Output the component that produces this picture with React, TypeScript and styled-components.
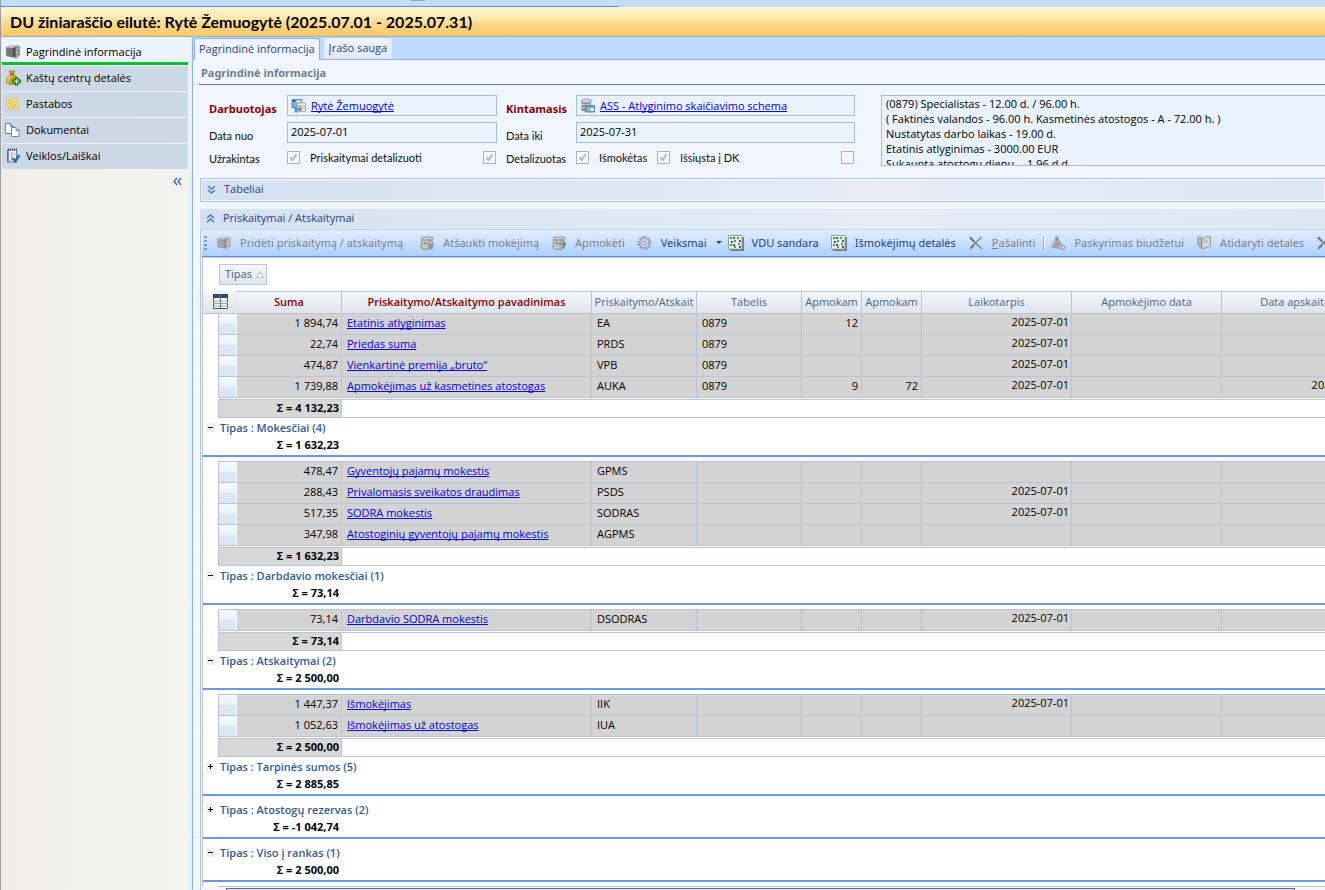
import React from 'react';
import styled, { createGlobalStyle } from 'styled-components';

const FONT = '"Open Sans", "Noto Sans", sans-serif';

const GlobalStyle = createGlobalStyle`
  * { box-sizing: border-box; }
  body { margin: 0; font-family: ${FONT}; font-size: 11px; line-height: 14px; color: #000; background: #eff6ff; }
  button, input, textarea { font: inherit; color: inherit; margin: 0; }
`;

/* ---------- page frame ---------- */

const Window = styled.div`
  height: 100vh;
  display: flex;
  flex-direction: column;
  overflow: hidden;
  border-left: 1px solid #9b9b9b;
`;

const TopStrip = styled.div`
  flex: none;
  height: 7px;
  background: #c3dcff;
  display: flex;
`;

const TopRibbon = styled.div`
  width: 47%;
  max-width: 618px;
  border-bottom: 1px solid #6593cf;
  background: #c3dcff;
  position: relative;
  &::after {
    content: '';
    position: absolute;
    left: 410px;
    top: 0;
    width: 14px;
    height: 1px;
    background: #9aa3b4;
  }
`;

const TitleBar = styled.header`
  flex: none;
  height: 30px;
  padding: 0 9px;
  display: flex;
  align-items: center;
  background: linear-gradient(#fff8d6 0%, #ffe6a8 40%, #fdd78a 60%, #fbc765 100%);
  border-bottom: 1px solid #8db2e3;
`;

const Title = styled.h1`
  margin: 0;
  font: 700 16px/20px Lato, "Noto Sans", sans-serif;
  white-space: nowrap;
`;

const Body = styled.div`
  flex: 1;
  min-height: 0;
  display: flex;
`;

/* ---------- sidebar ---------- */

const Sidebar = styled.nav`
  flex: none;
  width: 188px;
  padding: 3px 1px 0;
  background: linear-gradient(90deg, #eeedea, #f3f4f1);
  display: flex;
  flex-direction: column;
`;

const SideLink = styled.a<{ $active?: boolean }>`
  height: 25px;
  margin-bottom: 1px;
  padding: ${p => (p.$active ? '2px 3px 0' : '0 3px 2px')};
  display: flex;
  align-items: center;
  gap: 5px;
  color: #000;
  text-decoration: none;
  font-size: 11px;
  background: ${p => (p.$active ? '#ebf3fd' : '#cdd8e6')};
  border-bottom: ${p => (p.$active ? '3px solid #00c136' : '0')};
`;

const CollapseButton = styled.button`
  align-self: flex-end;
  margin: 5px 4px 0 0;
  padding: 2px;
  border: 0;
  background: none;
  line-height: 0;
`;

const Splitter = styled.div`
  flex: none;
  width: 4px;
  background: #e7f0fc;
  border-right: 1px solid #8db2e3;
`;

const Main = styled.main`
  flex: 1;
  min-width: 0;
  display: flex;
  flex-direction: column;
  background: #eff6ff;
`;

const Tabs = styled.div`
  flex: none;
  height: 23px;
  padding: 1px 1px 0;
  display: flex;
  gap: 4px;
  background: #bfdaff;
  border-bottom: 1px solid #8db2e3;
`;

const Tab = styled.button<{ $active?: boolean }>`
  height: ${p => (p.$active ? 22 : 21)}px;
  padding: 0 4px 2px;
  border: 1px solid ${p => (p.$active ? '#8db2e3' : '#d9e8fb')};
  border-bottom: 0;
  border-radius: 3px 3px 0 0;
  background: ${p => (p.$active ? '#eff6ff' : 'linear-gradient(#f1f4fa, #dfe9f8)')};
  color: #1f3f87;
  white-space: nowrap;
`;

const Content = styled.div`
  flex: 1;
  min-height: 0;
  padding-left: 6px;
  display: flex;
  flex-direction: column;
`;

const SectionTitle = styled.h2`
  flex: none;
  margin: 0 0 10px;
  height: 25px;
  padding: 6px 2px 0;
  font-size: 11px;
  line-height: 14px;
  font-family: "Noto Sans", sans-serif;
  color: #6f7f90;
  border-bottom: 1px solid #707c98;
`;

/* ---------- form ---------- */

const Form = styled.form`
  flex: none;
  display: grid;
  grid-template-columns: 78px 210px 9px 70px 279px 26px minmax(100px, 1fr);
  grid-template-rows: 21px 21px 17px;
  row-gap: 6px;
  padding-left: 10px;
  margin-bottom: 12px;
  overflow: hidden;
`;

const Label = styled.label<{ $required?: boolean; $col?: number }>`
  ${p => (p.$col ? `grid-column: ${p.$col};` : '')}
  align-self: end;
  white-space: nowrap;
  font-family: ${p => (p.$required ? '"Open Sans"' : 'Lato')}, "Noto Sans", sans-serif;
  font-size: 11px;
  line-height: 14px;
  font-weight: ${p => (p.$required ? 700 : 400)};
  color: ${p => (p.$required ? '#8b0000' : '#111')};
`;

const LinkField = styled.div<{ $col: number }>`
  grid-column: ${p => p.$col};
  display: flex;
  align-items: center;
  gap: 4px;
  padding: 0 3px;
  background: #eaf2fd;
  border: 1px solid #a3bde0;
`;

const Link = styled.a`
  color: #0000ee;
  text-decoration: underline;
  text-decoration-skip-ink: none;
  white-space: nowrap;
`;

const TextField = styled.input<{ $col: number }>`
  grid-column: ${p => p.$col};
  min-width: 0;
  padding: 0 3px 2px;
  background: #eaf2fd;
  border: 1px solid #a3bde0;
  border-radius: 0;
  outline: 0;
`;

const Memo = styled.textarea`
  grid-column: 7;
  grid-row: 1 / span 3;
  height: 71px;
  padding: 0 4px;
  line-height: 15px;
  background: #eaf2fd;
  border: 1px solid #a3bde0;
  border-right: 0;
  resize: none;
  overflow: hidden;
  outline: 0;
  white-space: pre;
`;

const CheckRow = styled.div<{ $col: number }>`
  grid-column: ${p => p.$col};
  display: flex;
  align-items: center;
  padding-right: 1px;
`;

const Push = styled.span`
  flex: 1;
`;

const CheckLabel = styled(Label)<{ $w?: number }>`
  align-self: center;
  margin-left: 10px;
  width: ${p => (p.$w ? p.$w + 'px' : 'auto')};
`;

const Check = styled.input`
  appearance: none;
  flex: none;
  width: 13px;
  height: 13px;
  border: 1px solid #b1b1b4;
  background: #f3f6fa;
  box-shadow: inset 0 0 0 1px #fff;
  &:checked {
    background: #f3f6fa
      url("data:image/svg+xml,%3Csvg xmlns='http://www.w3.org/2000/svg' width='11' height='11'%3E%3Cpath d='M2.5 5.5 4.7 8 8.5 2.2' fill='none' stroke='%23abbdd6' stroke-width='2'/%3E%3C/svg%3E")
      center no-repeat;
  }
`;

/* ---------- collapsible groups ---------- */

const Collapsed = styled.section`
  flex: none;
  height: 24px;
  margin: 0 0 7px 1px;
  border: 1px solid #b3c5da;
  border-right: 0;
  box-shadow: inset 0 0 0 1px #f5f9ff;
  background: linear-gradient(90deg, #d5e1f1, #e5ecf6 60%, #dde7f4);
`;

const GroupToggle = styled.button`
  display: flex;
  align-items: center;
  gap: 8px;
  width: 100%;
  height: 100%;
  padding: 0 0 2px 6px;
  border: 0;
  background: none;
  color: #1f3f87;
  text-align: left;
`;

const Expanded = styled.section`
  flex: 1;
  min-height: 0;
  margin-left: 1px;
  display: flex;
  flex-direction: column;
  border-left: 1px solid #b3c5da;
  border-top-left-radius: 3px;
`;

const ExpandedHead = styled.div`
  flex: none;
  height: 20px;
  margin-left: -1px;
  border-top-left-radius: 3px;
  background: linear-gradient(90deg, #d5e1f1, #e5ecf6 60%, #dde7f4);
`;

const Toolbar = styled.div`
  flex: none;
  height: 28px;
  margin-left: 1px;
  padding-left: 2px;
  display: flex;
  align-items: center;
  overflow: hidden;
  background: linear-gradient(#e0edff, #cbe1ff 45%, #abcfff);
  border-top: 1px solid #bcd9ff;
  border-bottom: 1px solid #6593cf;
`;

const Grip = styled.span`
  flex: none;
  width: 3px;
  height: 15px;
  margin-right: 9px;
  background: repeating-linear-gradient(#6f9ad6 0 2px, transparent 2px 4px);
`;

const Tool = styled.button<{ $off?: boolean; $tail?: number }>`
  flex: none;
  display: flex;
  align-items: center;
  gap: 8px;
  height: 22px;
  padding: 0 ${p => p.$tail ?? 12}px 0 0;
  border: 0;
  background: none;
  font-family: "Noto Sans", sans-serif;
  font-size: 11px;
  white-space: nowrap;
  color: ${p => (p.$off ? '#7b8088' : '#1f3f87')};
`;

const Separator = styled.span`
  flex: none;
  width: 2px;
  height: 15px;
  margin-right: 5px;
  border-left: 1px solid #8db2e3;
  border-right: 1px solid #fff;
`;

/* ---------- grid ---------- */

const GridBox = styled.div`
  flex: 1;
  min-height: 0;
  margin-left: 1px;
  overflow: hidden;
  background: #fff;
  border-top: 1px solid #c3c8d8;
  border-left: 1px solid #bcc3d6;
`;

const GroupPanel = styled.div`
  height: 33px;
  padding: 6px 16px;
`;

const GroupBy = styled.button`
  height: 21px;
  width: 48px;
  padding: 0 5px 1px;
  display: flex;
  align-items: center;
  gap: 4px;
  border: 1px solid #bcc3d6;
  background: linear-gradient(#f5f8fb, #dfe5ee);
  color: #3f5f8a;
`;

const Table = styled.table`
  table-layout: fixed;
  width: 1169px;
  border-collapse: separate;
  border-spacing: 0;
`;

const Head = styled.th<{ $required?: boolean; $corner?: boolean }>`
  height: 23px;
  padding: 0 2px 2px;
  overflow: hidden;
  white-space: nowrap;
  text-align: center;
  font-weight: ${p => (p.$required ? 600 : 400)};
  color: ${p => (p.$required ? '#8b0000' : '#4a6690')};
  background: linear-gradient(#f3f6f9, #dfe4ed);
  border-top: 1px solid ${p => (p.$corner ? '#f3f6f9' : '#bcc3d6')};
  border-right: 1px solid ${p => (p.$corner ? '#dfe4ed' : '#bcc3d6')};
  border-bottom: 1px solid #bcc3d6;
  svg { display: block; margin: 0 0 0 8px; }
`;

const Margin = styled.td`
  padding: 0;
`;

const Selector = styled.td`
  padding: 0;
  background: linear-gradient(#f6fafd 0, #e9f1f8 48%, #dce8f3 52%, #d9e7f3);
  border-left: 1px solid #bcc3d6;
  border-bottom: 1px solid #bcc3d6;
  border-right: 1px solid #f6fafd;
`;

const Cell = styled.td<{ $right?: boolean; $flush?: boolean; $raised?: boolean }>`
  height: 21px;
  padding: 0 ${p => (p.$flush ? 2 : 3)}px ${p => (p.$raised ? 4 : 2)}px 5px;
  overflow: hidden;
  white-space: nowrap;
  text-align: ${p => (p.$right ? 'right' : 'left')};
  background: #d3d3d3;
  border-right: 1px solid #bcc3d6;
  border-bottom: 1px solid #bcc3d6;
`;

const TopRule = styled.td`
  height: 5px;
  padding: 0;
  border-bottom: 1px solid #bcc3d6;
`;

const FooterCell = styled.td`
  height: 20px;
  padding: 1px 0 0;
`;

const FooterBox = styled.div<{ $sum?: boolean }>`
  height: 19px;
  padding-right: 2px;
  line-height: 16px;
  font-weight: 700;
  text-align: right;
  background: ${p => (p.$sum ? '#d8d8d8' : '#fff')};
  border: 1px solid #bcc3d6;
  border-left-width: ${p => (p.$sum ? 1 : 0)}px;
`;

const GroupCell = styled.td<{ $gap?: boolean }>`
  padding: ${p => (p.$gap ? 5 : 1)}px 0 0 3px;
  height: ${p => (p.$gap ? 43 : 39)}px;
  vertical-align: top;
  font-weight: 700;
  border-bottom: 2px solid #6c9ad9;
`;

const GroupName = styled.div`
  display: flex;
  align-items: center;
  gap: 5px;
  height: 17px;
  font-weight: 600;
  color: #2f5b9c;
`;

const ExpandButton = styled.button`
  width: 9px;
  height: 9px;
  padding: 0;
  border: 0;
  background: #efefef;
  line-height: 0;
`;

const GroupSum = styled.div`
  width: 133px;
  text-align: right;
  line-height: 17px;
`;

const ScrollStub = styled.div`
  flex: none;
  height: 3px;
  margin-left: 1px;
  padding: 1px 30px 0 24px;
  background: #f3f5f8;
  &::before {
    content: '';
    display: block;
    height: 2px;
    border: 1px solid #5a6a90;
    border-bottom: 0;
    background: #dfe6f2;
  }
`;

/* ---------- icons ---------- */

const IconSvg = styled.svg`
  flex: none;
`;

const Icon: React.FC<{ children: React.ReactNode; w?: number; h?: number }> = ({ children, w = 16, h = 16 }) => (
  <IconSvg width={w} height={h} viewBox={`0 0 ${w} ${h}`} aria-hidden="true">{children}</IconSvg>
);

const SafeIcon = ({ light }: { light?: boolean }) => (
  <Icon>
    <path d="M1 3.500 5 1.500h8l2 1v9l-2.500 1.500-1.500 2L8 13 1.500 12z" fill={light ? '#b5b5b5' : '#8c8c8c'} />
    <path d="m1 3.500 6.500 1v9L1.500 12z" fill={light ? '#a4a4a4' : '#767676'} />
    <path d="M1.500 3.300 5.500 1.500H13L8 4.200z" fill={light ? '#d0d0d0' : '#c4c4c4'} />
    <path d="m7.500 4.500 3.500-1.500v9l-3.500 1.500z" fill={light ? '#8f8f8f' : '#505050'} />
    <path d="m10.500 4.500 4-2v9l-3.500 3.500z" fill={light ? '#bdbdbd' : '#a6a6a6'} />
    <circle cx="12" cy="8.500" r="1.700" fill={light ? '#e6e6e6' : '#d8d8d8'} stroke={light ? '#8a8a8a' : '#555'} strokeWidth=".8" />
  </Icon>
);

const MoneyBagIcon = () => (
  <Icon>
    <path d="M4.500 1h5L8.500 3.500h-3z" fill="#d8a63a" stroke="#8d6a24" strokeWidth=".7" />
    <path d="M5.500 4h3c3 2 4 4.500 3.500 7.500-.3 2-2 3-5 3s-5-.5-5.500-2.500C1 9 2.500 6 5.500 4z" fill="#d9a028" stroke="#a5771c" strokeWidth=".6" />
    <path d="M5 6C3.500 7.500 2.800 9 3 11" stroke="#f8df92" strokeWidth="1.500" fill="none" />
    <path d="M5 4h4" stroke="#7d5b1b" />
    <path d="M10 7.500h3v2.300h2.500v3H13V15h-3v-2.200H7.500v-3H10z" fill="#2aa22a" stroke="#0d6c14" strokeWidth=".8" />
    <path d="M11.500 9v5M9 11.300h5" stroke="#c9f9bb" />
  </Icon>
);

const NotesIcon = () => (
  <Icon>
    <path d="M.5 5 11 1.500l3.500 10L4.500 15z" fill="#e9c858" />
    <path d="m1 4 10-2.500L14 12 4.500 14.500z" fill="#fbe992" stroke="#dcbc52" strokeWidth=".7" />
    <path d="m3 5.700 7.500-2M3.500 7.900l7.500-2M4.200 10.100l7.500-2M4.800 12.200l7.500-2" stroke="#c9a844" strokeWidth=".9" />
  </Icon>
);

const DocsIcon = () => (
  <Icon>
    <path d="M.5 1.500h5L8.500 4.500v7h-8z" fill="#fff" stroke="#6f86ac" />
    <path d="M5.500 1.500v3h3" fill="none" stroke="#6f86ac" />
    <path d="M6.500 5.500h4.500l3 3v6H6.500z" fill="#fff" stroke="#6f86ac" />
    <path d="M11 5.500v3h3" fill="none" stroke="#6f86ac" />
  </Icon>
);

const TasksIcon = () => (
  <Icon>
    <path d="M2.500 2h9v12h-9z" fill="#eef2f8" stroke="#6b7d9d" />
    <path d="M3 2v12" stroke="#54709e" strokeWidth="1.500" />
    <path d="M3 1.500h9" stroke="#44464d" strokeWidth="2" strokeDasharray="1 1" />
    <path d="M6.500 4v9" stroke="#d99898" />
    <path d="M7.500 5.500h3M7.500 7.500h3" stroke="#b9c6dc" />
    <path d="m7.500 10 2.700 3.200L14.500 7" stroke="#2868b8" strokeWidth="2.400" fill="none" />
  </Icon>
);

const PersonCardIcon = () => (
  <Icon>
    <path d="M1 1.500h10v8H1z" fill="#7fb4e2" stroke="#4f7fb0" strokeWidth=".8" />
    <path d="M1.500 2h3v2h-3z" fill="#2c5c94" />
    <path d="M5.500 2.500h5v2h-5z" fill="#ddeefc" />
    <path d="M3 9h4v5.500H4z" fill="#4a93cf" />
    <path d="M6.500 5h8v8.500h-8z" fill="#f4f1e8" stroke="#9aa0a8" strokeWidth=".8" />
    <path d="M7.500 7h3v3.500h-3z" fill="#dca14e" />
    <path d="M7.300 10.500h3.500v2H7.300z" fill="#3b6cab" />
    <path d="M11.500 8h2.300M11.500 10h2.300" stroke="#9da5b2" />
  </Icon>
);

const SchemaIcon = () => (
  <Icon>
    <path d="M1.500 3v9c0 1.500 8 2 9.500 0V3z" fill="#87909f" />
    <ellipse cx="6.500" cy="3" rx="5.500" ry="2" fill="#d3cede" stroke="#88849a" strokeWidth=".7" />
    <path d="M2 6c2 1.200 6 1.200 8.500 0M2 9c1.500 1 3 1 4 1" stroke="#d6dde8" fill="none" />
    <path d="M5.500 7.500h9v6.500h-9z" fill="#6ca9dc" stroke="#47749f" strokeWidth=".8" />
    <path d="M7 10h3v3H7z" fill="#e8a94c" />
    <path d="M10.500 10h3.500v3h-3.500z" fill="#e5eef8" />
  </Icon>
);

const PaymentIcon = ({ cancel }: { cancel?: boolean }) => (
  <Icon>
    <path d="M3 2h10.500l1 1.500-1.500 2L14 8v4l-2.500 2.500H3L1.500 12l.8-3L2 5.500z" fill="#b4b6b8" stroke="#97999b" strokeWidth=".8" />
    <path d="M4 3.500h8M3.500 6.500h5M3.500 9.500h4M3.500 12h5" stroke="#e2e3e3" strokeWidth="1.200" />
    <path d="M3 5h9.500M9.500 3.500v3" stroke="#8b8d90" strokeWidth=".9" />
    <circle cx="6" cy="8" r="1.500" fill="#8f9193" />
    {cancel ? (
      <path d="m9 8.500 5 5m0-5-5 5" stroke="#87898c" strokeWidth="1.600" />
    ) : (
      <path d="M8 9h6l-2-2.500m2 2.500-3 4.500" stroke="#808285" strokeWidth="1.600" fill="none" />
    )}
  </Icon>
);

const GearIcon = () => (
  <Icon>
    <circle cx="7.500" cy="8" r="6" fill="none" stroke="#8d8fb2" strokeWidth="2" strokeDasharray="1.600 1.542" />
    <circle cx="7.500" cy="8" r="4.800" fill="#cdcee8" stroke="#9495b8" />
    <circle cx="7.500" cy="8" r="3" fill="#dedff0" />
    <circle cx="7.500" cy="8" r="1.800" fill="#dcebff" stroke="#8486a6" />
  </Icon>
);

const MatrixIcon = () => (
  <Icon>
    <path d="M2 2h14v14H2z" fill="#777b80" />
    <path d="M.5.500h13.500v13.500H.5z" fill="#fbfcfd" stroke="#9a9ea2" />
    <path d="M4 1v12.500M7.300 1v12.500M10.600 1v12.500M1 4h12.500M1 7.300h12.500M1 10.600h12.500" stroke="#d4d8dc" strokeWidth=".8" />
    <path d="M2 2h2v2H2zM9 2h2v2H9zM6 5h2v2H6zM10 8h2v2h-2zM2 9h2v2H2zM6 11h2v2H6z" fill="#38b41c" />
    <path d="M5 2h2v2H5zM3 6h2v2H3zM11 5h2v2h-2zM5 9h2v2H5zM11 11h2v2h-2z" fill="#315fb8" />
  </Icon>
);

const CrossIcon = () => (
  <Icon>
    <path d="M2 2c3 3 7 8 12 12M14 2C9 6 5 10 2 14" stroke="#858585" strokeWidth="1.500" fill="none" />
    <path d="m2 2.500 4 4M3 13l3-3" stroke="#777" strokeWidth="2" />
  </Icon>
);

const BudgetIcon = () => (
  <Icon>
    <path d="M5 1h4L8 4H6z" fill="#a5a7a9" />
    <path d="M6 4h2c3 2 4 5 3.500 7.500C11 14 2 14 1.500 11.500 1.300 9 3 6 6 4z" fill="#a2a4a7" />
    <path d="M5.200 6C4 7.500 3.300 9 3.500 10" stroke="#dcddde" fill="none" />
    <path d="M5 4.200h4" stroke="#777" />
    <circle cx="10" cy="11.500" r="2" fill="#cfd1d3" stroke="#8d8f92" />
    <circle cx="13" cy="12.500" r="2" fill="#d6d8da" stroke="#8d8f92" />
  </Icon>
);

const OpenIcon = () => (
  <Icon>
    <path d="M1 2.500 4 1l3 2v7l-2 4-4-5z" fill="#9fa1a3" />
    <path d="m2.500 3 2 1M2 6h3M2.500 9h3" stroke="#e2e3e4" />
    <path d="m6 4 3-1 1-1.500h4.500V11L6 14z" fill="#d6d8da" stroke="#8e9092" strokeWidth=".9" />
    <path d="m8 6 4-1M8 8l4-1" stroke="#b3b5b7" />
  </Icon>
);

const ChevronsIcon = ({ up }: { up?: boolean }) => (
  <Icon w={9} h={9}>
    <path d={up ? 'm1 4 3.500-3L8 4M1 8l3.500-3L8 8' : 'm1 1 3.500 3L8 1M1 5l3.500 3L8 5'} stroke="#4278b5" strokeWidth="1.400" fill="none" />
  </Icon>
);

const CollapseIcon = () => (
  <Icon w={9} h={9}>
    <path d="M4 1 1 4.500 4 8M8 1 5 4.500 8 8" stroke="#2f63a8" strokeWidth="1.200" fill="none" />
  </Icon>
);

const ColumnsIcon = () => (
  <Icon>
    <path d="M.5.500h14v14H.5z" fill="#fff" stroke="#40566b" />
    <path d="M0 0h15v4H0z" fill="#33495f" />
    <path d="M0 7h15M0 9.500h15M0 12h15" stroke="#8ba3bb" />
    <path d="M7.500 0v15" stroke="#5d7890" />
  </Icon>
);

const SignIcon = ({ plus }: { plus?: boolean }) => (
  <Icon w={9} h={9}>
    <path d={plus ? 'M2 4.500h5M4.500 2v5' : 'M2 4.500h5'} stroke="#000" />
  </Icon>
);

/* ---------- data ---------- */

type Row = [sum: string, name: string, code: string, sheet: string, days: string, hours: string, period: string, posted: string];

interface Group {
  name?: string;
  sum: string;
  open?: boolean;
  gap?: boolean;
  rows: Row[];
}

const groups: Group[] = [
  {
    sum: '4 132,23',
    rows: [
      ['1 894,74', 'Etatinis atlyginimas', 'EA', '0879', '12', '', '2025-07-01', ''],
      ['22,74', 'Priedas suma', 'PRDS', '0879', '', '', '2025-07-01', ''],
      ['474,87', 'Vienkartinė premija „bruto“', 'VPB', '0879', '', '', '2025-07-01', ''],
      ['1 739,88', 'Apmokėjimas už kasmetines atostogas', 'AUKA', '0879', '9', '72', '2025-07-01', '2025-07-01'],
    ],
  },
  {
    name: 'Mokesčiai (4)',
    sum: '1 632,23',
    open: true,
    rows: [
      ['478,47', 'Gyventojų pajamų mokestis', 'GPMS', '', '', '', '', ''],
      ['288,43', 'Privalomasis sveikatos draudimas', 'PSDS', '', '', '', '2025-07-01', ''],
      ['517,35', 'SODRA mokestis', 'SODRAS', '', '', '', '2025-07-01', ''],
      ['347,98', 'Atostoginių gyventojų pajamų mokestis', 'AGPMS', '', '', '', '', ''],
    ],
  },
  {
    name: 'Darbdavio mokesčiai (1)',
    sum: '73,14',
    open: true,
    rows: [['73,14', 'Darbdavio SODRA mokestis', 'DSODRAS', '', '', '', '2025-07-01', '']],
  },
  {
    name: 'Atskaitymai (2)',
    sum: '2 500,00',
    open: true,
    rows: [
      ['1 447,37', 'Išmokėjimas', 'IIK', '', '', '', '2025-07-01', ''],
      ['1 052,63', 'Išmokėjimas už atostogas', 'IUA', '', '', '', '', ''],
    ],
  },
  { name: 'Tarpinės sumos (5)', sum: '2 885,85', rows: [] },
  { name: 'Atostogų rezervas (2)', sum: '-1 042,74', gap: true, rows: [] },
  { name: 'Viso į rankas (1)', sum: '2 500,00', gap: true, open: true, rows: [] },
];

const columnWidths = [15, 19, 105, 250, 105, 105, 60, 60, 150, 150, 150];

const memo = `(0879) Specialistas - 12.00 d. / 96.00 h.
( Faktinės valandos - 96.00 h. Kasmetinės atostogos - A - 72.00 h. )
Nustatytas darbo laikas - 19.00 d.
Etatinis atlyginimas - 3000.00 EUR
Sukaupta atostogų dienų - -1.96 d.d`;

const GroupBody = ({ group }: { group: Group }) => (
  <tbody>
    {group.name && (
      <tr>
        <GroupCell colSpan={11} $gap={group.gap}>
          <GroupName>
            <ExpandButton type="button" aria-label={group.open ? 'Suskleisti' : 'Išskleisti'}>
              <SignIcon plus={!group.open} />
            </ExpandButton>
            Tipas : {group.name}
          </GroupName>
          <GroupSum>Σ = {group.sum}</GroupSum>
        </GroupCell>
      </tr>
    )}
    {group.open && (
      <tr>
        <Margin />
        <TopRule colSpan={10} />
      </tr>
    )}
    {group.rows.map(([sum, name, code, sheet, days, hours, period, posted]) => (
      <tr key={name}>
        <Margin />
        <Selector />
        <Cell $right>{sum}</Cell>
        <Cell><Link href="#">{name}</Link></Cell>
        <Cell>{code}</Cell>
        <Cell>{sheet}</Cell>
        <Cell $right>{days}</Cell>
        <Cell $right>{hours}</Cell>
        <Cell $right $flush $raised>{period}</Cell>
        <Cell />
        <Cell $right $flush $raised>{posted}</Cell>
      </tr>
    ))}
    {group.rows.length > 0 && (
      <tr>
        <Margin />
        <FooterCell colSpan={2}><FooterBox $sum>Σ = {group.sum}</FooterBox></FooterCell>
        <FooterCell colSpan={8}><FooterBox /></FooterCell>
      </tr>
    )}
  </tbody>
);

export default function App() {
  return (
    <>
      <GlobalStyle />
      <Window>
        <TopStrip><TopRibbon /></TopStrip>
        <TitleBar>
          <Title>DU žiniaraščio eilutė: Rytė Žemuogytė (2025.07.01 - 2025.07.31)</Title>
        </TitleBar>
        <Body>
          <Sidebar>
            <SideLink href="#" $active><SafeIcon />Pagrindinė informacija</SideLink>
            <SideLink href="#"><MoneyBagIcon />Kaštų centrų detalės</SideLink>
            <SideLink href="#"><NotesIcon />Pastabos</SideLink>
            <SideLink href="#"><DocsIcon />Dokumentai</SideLink>
            <SideLink href="#"><TasksIcon />Veiklos/Laiškai</SideLink>
            <CollapseButton type="button" aria-label="Suskleisti meniu"><CollapseIcon /></CollapseButton>
          </Sidebar>
          <Splitter />
          <Main>
            <Tabs>
              <Tab type="button" $active>Pagrindinė informacija</Tab>
              <Tab type="button">Įrašo sauga</Tab>
            </Tabs>
            <Content>
              <SectionTitle>Pagrindinė informacija</SectionTitle>
              <Form>
                <Label as="span" $required $col={1}>Darbuotojas</Label>
                <LinkField $col={2}><PersonCardIcon /><Link href="#">Rytė Žemuogytė</Link></LinkField>
                <Label as="span" $required $col={4}>Kintamasis</Label>
                <LinkField $col={5}><SchemaIcon /><Link href="#">ASS - Atlyginimo skaičiavimo schema</Link></LinkField>
                <Memo readOnly aria-label="Aprašymas" value={memo} />
                <Label htmlFor="from" $col={1}>Data nuo</Label>
                <TextField id="from" $col={2} defaultValue="2025-07-01" />
                <Label htmlFor="to" $col={4}>Data iki</Label>
                <TextField id="to" $col={5} defaultValue="2025-07-31" />
                <Label htmlFor="locked" $col={1}>Užrakintas</Label>
                <CheckRow $col={2}>
                  <Check type="checkbox" id="locked" defaultChecked />
                  <CheckLabel htmlFor="accruals">Priskaitymai detalizuoti</CheckLabel>
                  <Push />
                  <Check type="checkbox" id="accruals" defaultChecked />
                </CheckRow>
                <Label htmlFor="detailed" $col={4}>Detalizuotas</Label>
                <CheckRow $col={5}>
                  <Check type="checkbox" id="detailed" defaultChecked />
                  <CheckLabel htmlFor="paid" $w={58}>Išmokėtas</CheckLabel>
                  <Check type="checkbox" id="paid" defaultChecked />
                  <CheckLabel htmlFor="sent">Išsiųsta į DK</CheckLabel>
                  <Push />
                  <Check type="checkbox" id="sent" />
                </CheckRow>
              </Form>
              <Collapsed>
                <GroupToggle type="button"><ChevronsIcon />Tabeliai</GroupToggle>
              </Collapsed>
              <Expanded>
                <ExpandedHead>
                  <GroupToggle type="button"><ChevronsIcon up />Priskaitymai / Atskaitymai</GroupToggle>
                </ExpandedHead>
                <Toolbar>
                  <Grip />
                  <Tool type="button" $off $tail={16}><SafeIcon light />Pridėti priskaitymą / atskaitymą</Tool>
                  <Tool type="button" $off><PaymentIcon cancel />Atšaukti mokėjimą</Tool>
                  <Tool type="button" $off><PaymentIcon />Apmokėti</Tool>
                  <Tool type="button" $tail={6}>
                    <GearIcon />Veiksmai
                    <Icon w={7} h={4}><path d="M1 0h6L4 3z" fill="#1f3f87" /></Icon>
                  </Tool>
                  <Tool type="button"><MatrixIcon />VDU sandara</Tool>
                  <Tool type="button"><MatrixIcon />Išmokėjimų detalės</Tool>
                  <Tool type="button" $off $tail={8}><CrossIcon /><span><u>P</u>ašalinti</span></Tool>
                  <Separator />
                  <Tool type="button" $off><BudgetIcon />Paskyrimas biudžetui</Tool>
                  <Tool type="button" $off><OpenIcon />Atidaryti detales</Tool>
                  <Tool type="button" $off aria-label="Pašalinti detales"><CrossIcon /></Tool>
                </Toolbar>
                <GridBox>
                  <GroupPanel>
                    <GroupBy type="button">
                      Tipas
                      <Icon w={8} h={7}><path d="M.5 6.500 4 .5l3.500 6z" fill="#f7f9fc" stroke="#a9afbb" strokeWidth=".8" /></Icon>
                    </GroupBy>
                  </GroupPanel>
                  <Table>
                    <colgroup>{columnWidths.map((w, i) => <col key={i} width={w} />)}</colgroup>
                    <thead>
                      <tr>
                        <Head colSpan={2} $corner aria-label="Stulpeliai"><ColumnsIcon /></Head>
                        <Head $required>Suma</Head>
                        <Head $required>Priskaitymo/Atskaitymo pavadinimas</Head>
                        <Head>Priskaitymo/Atskait</Head>
                        <Head>Tabelis</Head>
                        <Head>Apmokam</Head>
                        <Head>Apmokam</Head>
                        <Head>Laikotarpis</Head>
                        <Head>Apmokėjimo data</Head>
                        <Head>Data apskaitai</Head>
                      </tr>
                    </thead>
                    {groups.map((g, i) => <GroupBody key={i} group={g} />)}
                  </Table>
                </GridBox>
                <ScrollStub />
              </Expanded>
            </Content>
          </Main>
        </Body>
      </Window>
    </>
  );
}
